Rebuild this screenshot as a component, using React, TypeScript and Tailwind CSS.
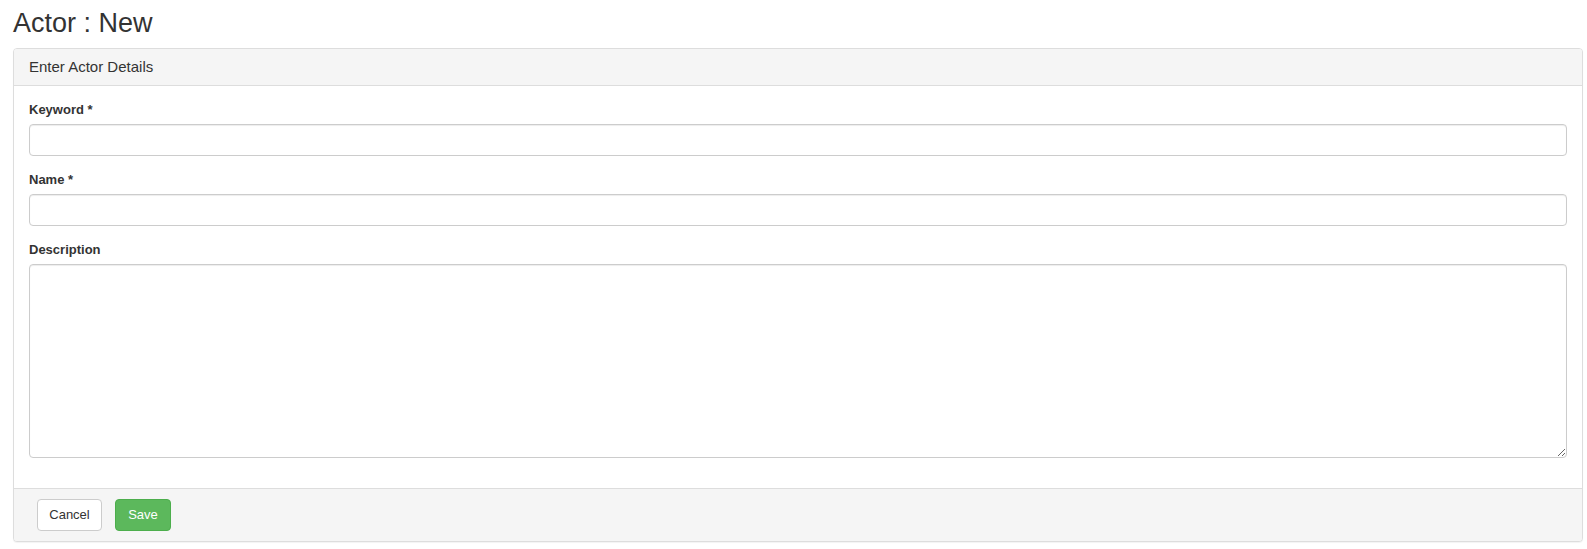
import React from 'react';

const labelCls = 'block text-[13px] leading-[18px] font-bold text-[#333] mb-[5px]';
const inputCls =
  'block w-full h-[32px] px-3 border border-[#ccc] rounded-[4px] bg-white text-[13px] text-[#555] shadow-[inset_0_1px_1px_rgba(0,0,0,0.075)] outline-none';

const App: React.FC = () => (
  <div className="min-h-[549px] bg-white pl-[13px] pr-[4px] font-['Liberation_Sans',Arial,sans-serif] text-[#333]">
    <h3 className="pt-[8px] mb-[10px] text-[27px] leading-[30px] font-normal text-[#333]">Actor : New</h3>

    <div className="border border-[#ddd] rounded-[4px] bg-white shadow-[0_1px_1px_rgba(0,0,0,0.05)]">
      <div className="h-[37px] flex items-center px-[15px] bg-[#f5f5f5] border-b border-[#ddd] rounded-t-[3px] text-[15px]">
        Enter Actor Details
      </div>

      <form className="p-[15px]" onSubmit={(e) => e.preventDefault()}>
        <div className="mb-[15px]">
          <label className={labelCls}>Keyword *</label>
          <input type="text" className={inputCls} />
        </div>
        <div className="mb-[15px]">
          <label className={labelCls}>Name *</label>
          <input type="text" className={inputCls} />
        </div>
        <div className="mb-[15px]">
          <label className={labelCls}>Description</label>
          <textarea className="block w-full h-[194px] px-3 py-2 border border-[#ccc] rounded-[4px] bg-white text-[13px] text-[#555] shadow-[inset_0_1px_1px_rgba(0,0,0,0.075)] outline-none" />
        </div>
      </form>

      <div className="flex items-center gap-[13px] pl-[23px] py-[10px] bg-[#f5f5f5] border-t border-[#ddd] rounded-b-[3px]">
        <button className="h-[32px] w-[65px] border border-[#ccc] rounded-[4px] bg-white text-[13px] text-[#333]">
          Cancel
        </button>
        <button className="h-[32px] w-[56px] border border-[#4cae4c] rounded-[4px] bg-[#5cb85c] text-[13px] text-white">
          Save
        </button>
      </div>
    </div>
  </div>
);

export default App;
